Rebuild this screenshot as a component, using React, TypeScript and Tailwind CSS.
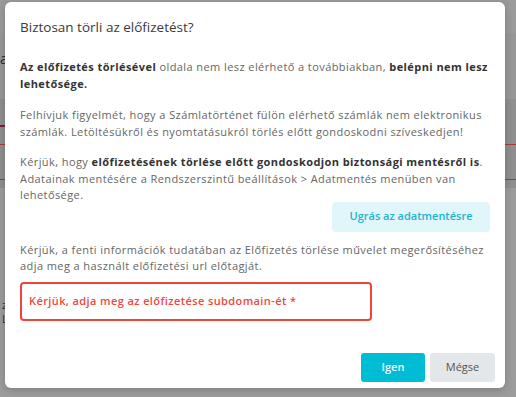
import React from 'react';

const font = { fontFamily: '"Open Sans", "Liberation Sans", sans-serif' };

export default function App() {
  return (
    <div className="relative w-[516px] h-[397px] overflow-hidden bg-[#9a9a9a]" style={font}>
      {/* page behind the overlay */}
      <div className="flex flex-col">
        <div className="h-[33px] bg-[#9b9b9b]" />
        <div className="h-[67px] bg-[#979797] border-b border-[#8f8f8f] text-[15px] text-[#2a2a2a] pt-[14px]">a</div>
        <div className="h-[88px] bg-[#8f8f8f] flex flex-col">
          <div className="h-[27px] border-b-2 border-[#7b1f3a] w-[6px]" />
          <div className="h-[18px] border-b border-[#a33a3a]" />
          <div className="h-[35px] border-b border-[#a33a3a]" />
        </div>
        <div className="h-[209px] bg-[#9c9c9c] pt-[110px] pl-[2px] text-[11px] leading-[14px] text-[#333]">
          <div>z</div>
          <div>L</div>
        </div>
      </div>

      {/* modal */}
      <div className="absolute left-[5px] top-[2px] w-[500px] h-[386px] bg-white rounded-[6px] shadow-[0_2px_8px_rgba(0,0,0,0.2)] flex flex-col px-[15px]">
        <h2 className="pt-[17px] text-[13.5px] leading-[16px] text-[#3a3a3a]">Biztosan törli az előfizetést?</h2>

        <div className="pt-[24px] text-[11px] leading-[16.5px] tracking-[0.42px] text-[#666]">
          <p>
            <b className="font-bold text-[#333]">Az előfizetés törlésével</b> oldala nem lesz elérhető a továbbiakban,{' '}
            <b className="font-bold text-[#333]">belépni nem lesz</b>{' '}
            <b className="font-bold text-[#333]">lehetősége.</b>
          </p>
          <p className="mt-[15px]">
            Felhívjuk figyelmét, hogy a Számlatörténet fülön elérhető számlák nem elektronikus számlák. Letöltésükről és nyomtatásukról törlés előtt gondoskodni szíveskedjen!
          </p>
          <p className="mt-[14px]">
            <span>Kérjük, hogy </span>
            <b className="font-bold text-[#333]">előfizetésének törlése előtt gondoskodjon biztonsági mentésről is</b>
            <span>.</span>{' '}
            <span>Adatainak mentésére a Rendszerszintű beállítások &gt; Adatmentés menüben van lehetősége.</span>
          </p>
          <div className="flex justify-end -mt-[2px]">
            <button className="w-[158px] h-[30px] rounded-[4px] bg-[#e0f6fa] text-[#1cb5cc] text-[11px] tracking-normal font-semibold">
              Ugrás az adatmentésre
            </button>
          </div>
          <p className="mt-[10px]">
            Kérjük, a fenti információk tudatában az Előfizetés törlése művelet megerősítéséhez adja meg a használt előfizetési url előtagját.
          </p>
          <div className="mt-[7px] w-[352px] h-[39px] rounded-[4px] border-2 border-[#f04438] flex items-center px-[7px]">
            <span className="text-[11px] font-semibold tracking-[0.4px] text-[#f0473c]">Kérjük, adja meg az előfizetése subdomain-ét *</span>
          </div>
        </div>

        <div className="flex justify-end gap-[5px] mt-auto mb-[6px] -mr-[5px]">
          <button className="w-[64px] h-[29px] rounded-[3px] bg-[#00bcd4] text-white text-[11px] font-semibold">Igen</button>
          <button className="w-[65px] h-[29px] rounded-[3px] bg-[#e4e7ea] text-[#555] text-[11px]">Mégse</button>
        </div>
      </div>
    </div>
  );
}
